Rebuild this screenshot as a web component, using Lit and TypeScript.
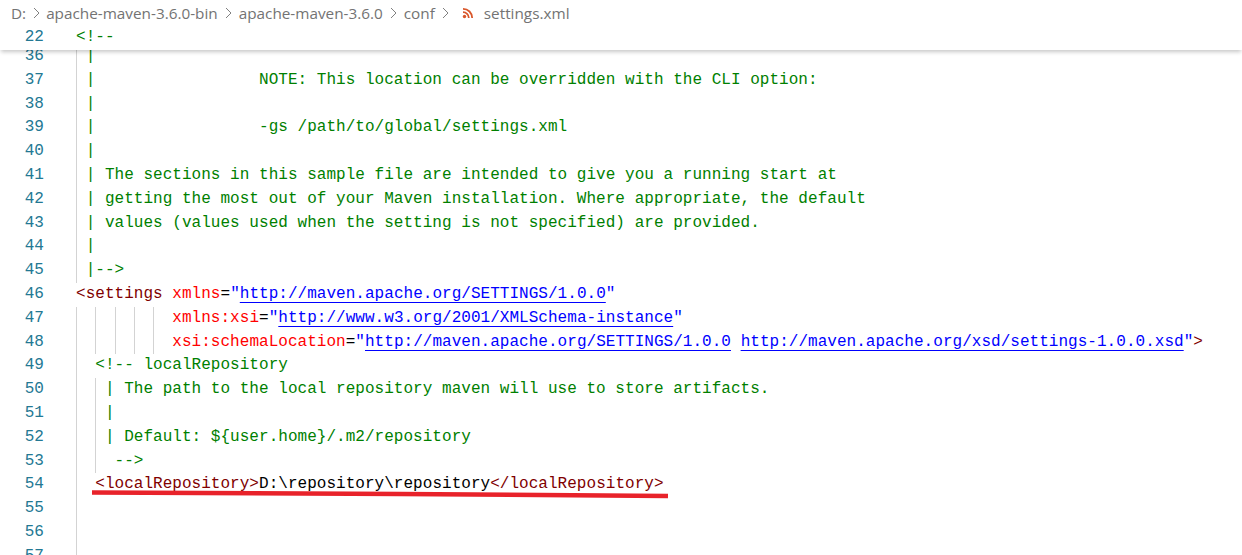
import { LitElement, html, css, svg } from "lit";
import { customElement } from "lit/decorators.js";

type Seg = [string, string];
interface Line { n: number; segs: Seg[]; guides?: number[]; }

const c = (t: string): Seg => ["cm", t];
const t = (s: string): Seg => ["tag", s];
const a = (s: string): Seg => ["attr", s];
const k = (s: string): Seg => ["blk", s];
const u = (s: string): Seg => ["url", s];
const s = (x: string): Seg => ["str", x];

const G0 = [0];
const LINES: Line[] = [
  { n: 36, segs: [c(" |")], guides: G0 },
  { n: 37, segs: [c(" |                 NOTE: This location can be overridden with the CLI option:")], guides: G0 },
  { n: 38, segs: [c(" |")], guides: G0 },
  { n: 39, segs: [c(" |                 -gs /path/to/global/settings.xml")], guides: G0 },
  { n: 40, segs: [c(" |")], guides: G0 },
  { n: 41, segs: [c(" | The sections in this sample file are intended to give you a running start at")], guides: G0 },
  { n: 42, segs: [c(" | getting the most out of your Maven installation. Where appropriate, the default")], guides: G0 },
  { n: 43, segs: [c(" | values (values used when the setting is not specified) are provided.")], guides: G0 },
  { n: 44, segs: [c(" |")], guides: G0 },
  { n: 45, segs: [c(" |-->")], guides: G0 },
  { n: 46, segs: [t("<settings"), k(" "), a("xmlns"), k("="), s('"'), u("http://maven.apache.org/SETTINGS/1.0.0"), s('"')] },
  { n: 47, segs: [k("          "), a("xmlns:xsi"), k("="), s('"'), u("http://www.w3.org/2001/XMLSchema-instance"), s('"')], guides: [0, 2, 4, 6, 8] },
  { n: 48, segs: [k("          "), a("xsi:schemaLocation"), k("="), s('"'), u("http://maven.apache.org/SETTINGS/1.0.0"), k(" "), u("http://maven.apache.org/xsd/settings-1.0.0.xsd"), s('"'), t(">")], guides: [0, 2, 4, 6, 8] },
  { n: 49, segs: [c("  <!-- localRepository")], guides: G0 },
  { n: 50, segs: [c("   | The path to the local repository maven will use to store artifacts.")], guides: [0, 2] },
  { n: 51, segs: [c("   |")], guides: [0, 2] },
  { n: 52, segs: [c("   | Default: ${user.home}/.m2/repository")], guides: [0, 2] },
  { n: 53, segs: [c("    -->")], guides: [0, 2] },
  { n: 54, segs: [k("  "), t("<localRepository>"), k("D:\\repository\\repository"), t("</localRepository>")], guides: G0 },
  { n: 55, segs: [], guides: G0 },
  { n: 56, segs: [], guides: G0 },
  { n: 57, segs: [], guides: G0 },
];

const CRUMBS = ["D:", "apache-maven-3.6.0-bin", "apache-maven-3.6.0", "conf"];

@customElement("app-root")
export class AppRoot extends LitElement {
  static styles = css`
    :host { display: block; width: 1242px; height: 555px; overflow: hidden; background: #fff; position: relative; }
    .crumbs { height: 26px; display: flex; align-items: center; padding-left: 11px; font: 15.3px "Open Sans", "Noto Sans", sans-serif; color: #737373; background: #fff; position: relative; z-index: 2; }
    .chev { width: 21px; height: 16px; flex: none; }
    .chev.first { width: 20px; }
    .rss { width: 12px; height: 12px; margin: 0 10px 0 6px; flex: none; }
    .row { display: flex; height: 23.8px; font: 16px/23.8px "Liberation Mono", "DejaVu Sans Mono", monospace; letter-spacing: 0.03px; }
    .num { width: 44px; flex: none; text-align: right; color: #237893; }
    .code { margin-left: 32px; position: relative; flex: 1; }
    .code span { white-space: pre; }
    .sticky { position: relative; z-index: 2; background: #fff; height: 24px; box-shadow: 0 3px 4px -1px rgba(0,0,0,.22); }
    .view { margin-top: -5px; }
    .g { position: absolute; top: 0; bottom: 0; width: 1px; background: #d3d3d3; }
    .cm { color: #008000; }
    .tag { color: #800000; }
    .attr { color: #ff0000; }
    .blk { color: #000; }
    .str { color: #0000ff; }
    .url { color: #0000ff; text-decoration: underline; text-underline-offset: 4px; }
    .mark { position: absolute; left: 0; top: 0; width: 1242px; height: 555px; pointer-events: none; z-index: 3; }
  `;

  private chev(first: boolean) {
    return html`<svg class="chev ${first ? "first" : ""}" viewBox="0 0 ${first ? 20 : 21} 16"><path d="M8 3 13 8 8 13" fill="none" stroke="#808080" stroke-width="1"/></svg>`;
  }

  render() {
    return html`
      <div class="crumbs">
        ${CRUMBS.map((x, i) => html`<span>${x}</span>${this.chev(i === 0)}`)}
        <svg class="rss" viewBox="0 0 12 12">
          <circle cx="2.5" cy="9.5" r="1.7" fill="#d9572b"/>
          <path d="M1 5.2a5.8 5.8 0 0 1 5.8 5.8M1 1.8A9.2 9.2 0 0 1 10.2 11" fill="none" stroke="#d9572b" stroke-width="1.8"/>
        </svg>
        <span>settings.xml</span>
      </div>
      <div class="row sticky">
        <div class="num">22</div>
        <div class="code"><span class="cm">&lt;!--</span></div>
      </div>
      <div class="view">
        ${LINES.map((l) => html`
          <div class="row">
            <div class="num">${l.n}</div>
            <div class="code">
              ${(l.guides ?? []).map((g) => html`<i class="g" style="left:${Math.round(g * 9.65)}px"></i>`)}${l.segs.map(([cl, x]) => html`<span class=${cl}>${x}</span>`)}
            </div>
          </div>`)}
      </div>
      <svg class="mark" viewBox="0 0 1242 555">
        ${svg`<path d="M92 492.5 L400 494 L668 496" fill="none" stroke="#e8222a" stroke-width="4.5"/>`}
      </svg>
    `;
  }
}
